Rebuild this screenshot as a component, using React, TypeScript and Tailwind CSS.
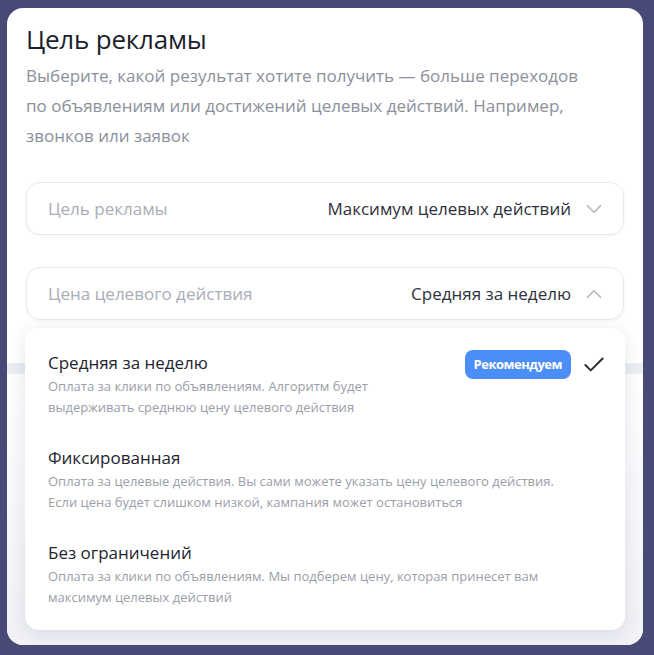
import { Check, ChevronDown, ChevronUp } from "lucide-react";

const font = { fontFamily: '"Open Sans", "Noto Sans", sans-serif' };

const options = [
  {
    title: "Средняя за неделю",
    desc: "Оплата за клики по объявлениям. Алгоритм будет\nвыдерживать среднюю цену целевого действия",
    recommended: true,
  },
  {
    title: "Фиксированная",
    desc: "Оплата за целевые действия. Вы сами можете указать цену целевого действия.\nЕсли цена будет слишком низкой, кампания может остановиться",
    recommended: false,
  },
  {
    title: "Без ограничений",
    desc: "Оплата за клики по объявлениям. Мы подберем цену, которая принесет вам\nмаксимум целевых действий",
    recommended: false,
  },
];

function SelectField({ label, value, open }: { label: string; value: string; open?: boolean }) {
  return (
    <div className="flex h-[53px] items-center justify-between rounded-[14px] border border-[#e7e9ef] pl-[21px] pr-[16px] shadow-[0_1px_3px_rgba(30,40,80,0.06)]">
      <span className="text-[17px] text-[#a9adb8]">{label}</span>
      <div className="flex items-center gap-[10px]">
        <span className="text-[17px] text-[#2e313c]">{value}</span>
        {open ? (
          <ChevronUp className="h-[26px] w-[26px] text-[#b4b8c3]" strokeWidth={1.6} />
        ) : (
          <ChevronDown className="h-[26px] w-[26px] text-[#b4b8c3]" strokeWidth={1.6} />
        )}
      </div>
    </div>
  );
}

export default function App() {
  return (
    <div className="h-[655px] w-[654px] bg-[#474a77] pb-[10px] pl-[7px] pr-[11px] pt-[8px]" style={font}>
      <div className="relative flex h-full w-full flex-col overflow-hidden rounded-[16px] bg-white">
        <div className="px-[19px] pt-[14px]">
          <h1 className="text-[26px] leading-[34px] tracking-[-0.2px] text-[#1c1f2b]">Цель рекламы</h1>
          <p className="mt-[5px] text-[17px] leading-[30px] text-[#8b909c]">
            Выберите, какой результат хотите получить — больше переходов
            <br />
            по объявлениям или достижений целевых действий. Например,
            <br />
            звонков или заявок
          </p>
          <div className="mt-[31px] flex flex-col gap-[32px]">
            <SelectField label="Цель рекламы" value="Максимум целевых действий" />
            <SelectField label="Цена целевого действия" value="Средняя за неделю" open />
          </div>
        </div>

        <div className="mt-[43px] h-[11px] bg-[#eceef4]" />
        <div className="flex-1 bg-gradient-to-b from-white to-[#f1f2f7]" />

        <div className="absolute left-[18px] top-[320px] h-[302px] w-[600px] rounded-[14px] bg-white pl-[23px] pr-[18px] pt-[22px] shadow-[0_4px_18px_rgba(30,40,90,0.12)]">
          <div className="flex flex-col gap-[27px]">
            {options.map((o) => (
              <div key={o.title} className="flex items-start justify-between">
                <div>
                  <div className="text-[17px] leading-[26px] text-[#22252f]">{o.title}</div>
                  <div className="whitespace-pre-line text-[13px] leading-[21px] text-[#9a9ea9]">
                    {o.desc}
                  </div>
                </div>
                {o.recommended && (
                  <div className="flex items-center gap-[10px]">
                    <span className="flex h-[29px] items-center rounded-[8px] bg-[#4c8ef7] px-[9px] text-[13px] font-bold tracking-[-0.5px] text-white">
                      Рекомендуем
                    </span>
                    <Check className="h-[26px] w-[26px] text-[#2a2d36]" strokeWidth={1.8} />
                  </div>
                )}
              </div>
            ))}
          </div>
        </div>
      </div>
    </div>
  );
}
